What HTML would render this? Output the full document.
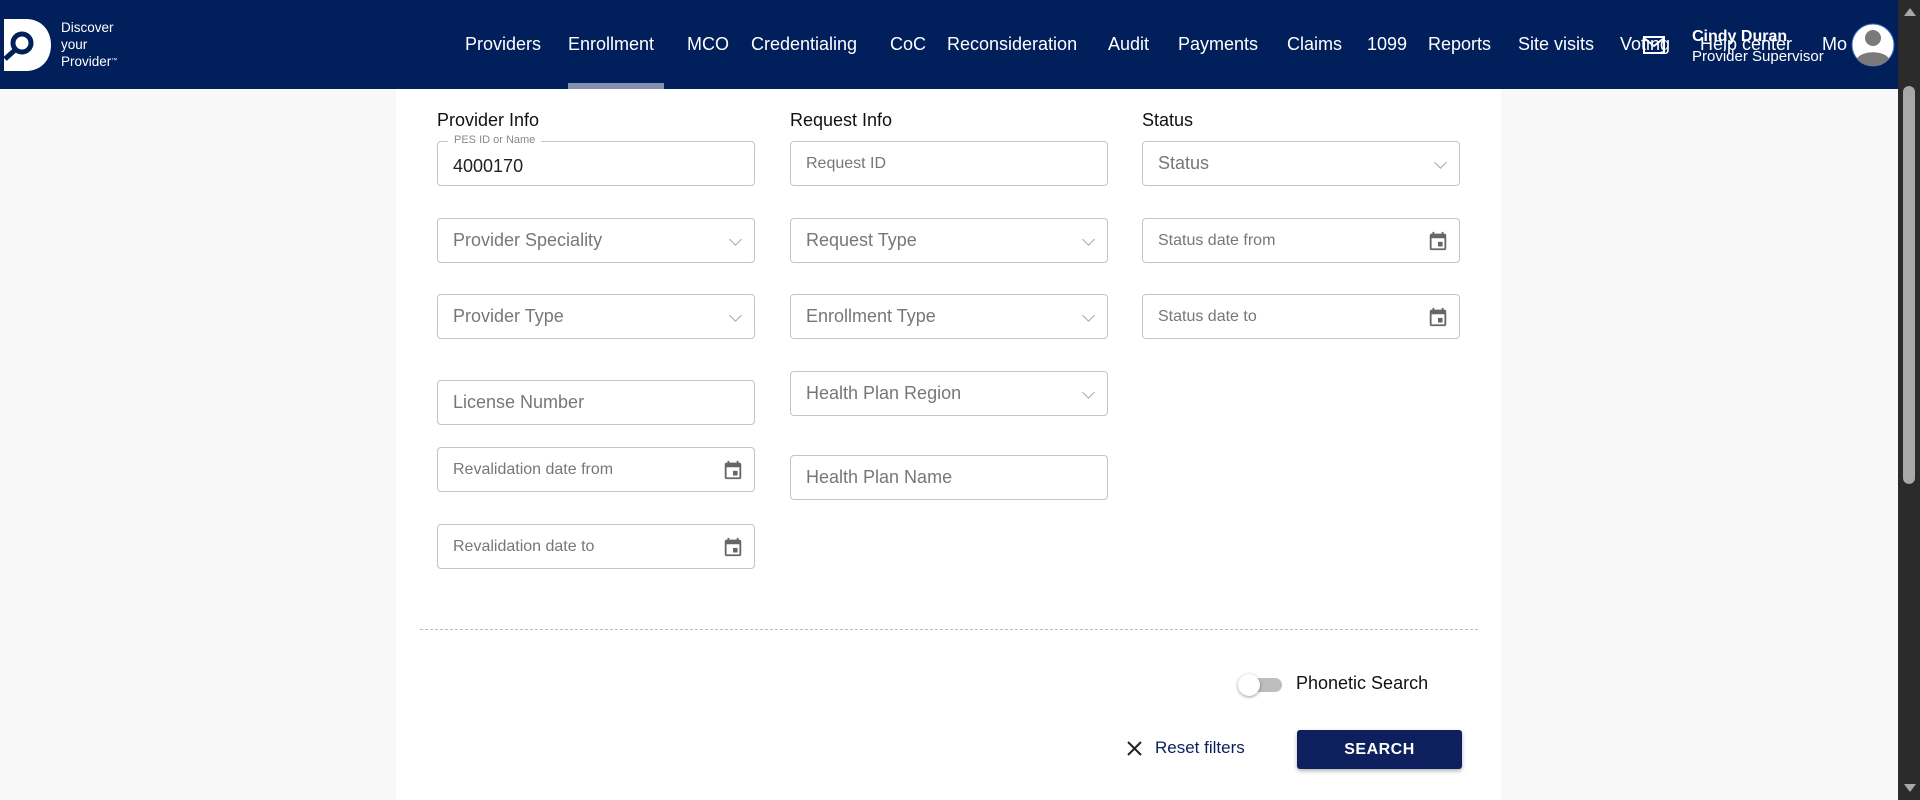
<!DOCTYPE html>
<html><head><meta charset="utf-8"><style>
*{box-sizing:border-box;margin:0;padding:0}
body{width:1920px;height:800px;overflow:hidden;background:#f8f8f8;font-family:"Liberation Sans",sans-serif;position:relative}
.hdr{position:absolute;left:0;top:0;width:1898px;height:89px;background:#001f5b;color:#fff}
.nav{position:absolute;top:34px;font-size:18px;white-space:nowrap}
.ul{position:absolute;left:568px;top:83px;width:96px;height:6px;background:#8490b0}
.card{position:absolute;left:396px;top:89px;width:1105px;height:711px;background:#fff}
.h{position:absolute;top:110px;font-size:18px;color:#111}
.f{position:absolute;width:318px;height:45px;border:1px solid #c4c4c4;border-radius:4px;background:#fff;font-size:18px;color:#777;padding-left:15px;line-height:43px}
.f.s{font-size:16px}
.chev{position:absolute;right:14px;top:16px;width:9px;height:9px;border-right:1.5px solid #aaa;border-bottom:1.5px solid #aaa;transform:rotate(45deg)}
.cal{position:absolute;right:10px;top:11px}
.sb{position:absolute;left:1898px;top:0;width:22px;height:800px;background:#2b2b2b}
</style></head><body>
<div class="hdr">
<svg style="position:absolute;left:4px;top:19px" width="48" height="52" viewBox="0 0 48 52"><path d="M0 0H22C37 0 47 11 47 26C47 41 37 52 22 52H0Z" fill="#fff"/><circle cx="18" cy="24" r="9" fill="none" stroke="#001f5b" stroke-width="5"/><path d="M11 31L1 40" stroke="#001f5b" stroke-width="5"/></svg>
<div style="position:absolute;left:61px;top:19px;font-size:13.5px;line-height:17px">Discover<br>your<br>Provider<span style="font-size:6px;vertical-align:top">™</span></div>
<span class="nav" style="left:465px">Providers</span>
<span class="nav" style="left:568px">Enrollment</span>
<span class="nav" style="left:687px">MCO</span>
<span class="nav" style="left:751px">Credentialing</span>
<span class="nav" style="left:890px">CoC</span>
<span class="nav" style="left:947px">Reconsideration</span>
<span class="nav" style="left:1108px">Audit</span>
<span class="nav" style="left:1178px">Payments</span>
<span class="nav" style="left:1287px">Claims</span>
<span class="nav" style="left:1367px">1099</span>
<span class="nav" style="left:1428px">Reports</span>
<span class="nav" style="left:1518px">Site visits</span>
<span class="nav" style="left:1620px">Voting</span>
<span class="nav" style="left:1700px">Help center</span>
<span class="nav" style="left:1822px">Mo</span>
<svg style="position:absolute;left:1643px;top:35px" width="22" height="20" viewBox="0 0 22 20"><rect x="1" y="2" width="20" height="16" fill="none" stroke="#fff" stroke-width="2"/><path d="M1 3L11 11L21 3" fill="none" stroke="#fff" stroke-width="2"/></svg>
<div style="position:absolute;left:1692px;top:28px;font-size:16px;font-weight:bold">Cindy Duran</div>
<div style="position:absolute;left:1692px;top:48px;font-size:15px">Provider Supervisor</div>
<svg style="position:absolute;left:1851px;top:23px" width="44" height="44" viewBox="0 0 44 44"><circle cx="22" cy="22" r="21" fill="#fff" stroke="#3a6fc4"/><circle cx="22" cy="15" r="8" fill="#7a7a7a"/><path d="M6 36C10 27 34 27 38 36C34 41 28 43 22 43C16 43 10 41 6 36Z" fill="#7a7a7a"/></svg>
<div class="ul"></div>
</div>
<div class="card"></div>
<div class="h" style="left:437px">Provider Info</div>
<div class="h" style="left:790px">Request Info</div>
<div class="h" style="left:1142px">Status</div>

<div class="f" style="left:437px;top:141px;color:#222;padding-top:3px">4000170
<span style="position:absolute;left:10px;top:-9px;font-size:11px;line-height:14px;background:#fff;padding:0 6px;color:#888">PES ID or Name</span></div>
<div class="f s" style="left:790px;top:141px">Request ID</div>
<div class="f" style="left:1142px;top:141px">Status<i class="chev"></i></div>

<div class="f" style="left:437px;top:218px">Provider Speciality<i class="chev"></i></div>
<div class="f" style="left:790px;top:218px">Request Type<i class="chev"></i></div>
<div class="f s" style="left:1142px;top:218px">Status date from<svg class="cal" width="22" height="22" viewBox="0 0 24 24"><path d="M19 4h-1V2h-2v2H8V2H6v2H5C3.9 4 3 4.9 3 6v14c0 1.1.9 2 2 2h14c1.1 0 2-.9 2-2V6c0-1.1-.9-2-2-2zm0 16H5V9h14v11zM12 13h5v5h-5z" fill="#666"/></svg></div>

<div class="f" style="left:437px;top:294px">Provider Type<i class="chev"></i></div>
<div class="f" style="left:790px;top:294px">Enrollment Type<i class="chev"></i></div>
<div class="f s" style="left:1142px;top:294px">Status date to<svg class="cal" width="22" height="22" viewBox="0 0 24 24"><path d="M19 4h-1V2h-2v2H8V2H6v2H5C3.9 4 3 4.9 3 6v14c0 1.1.9 2 2 2h14c1.1 0 2-.9 2-2V6c0-1.1-.9-2-2-2zm0 16H5V9h14v11zM12 13h5v5h-5z" fill="#666"/></svg></div>

<div class="f" style="left:790px;top:371px">Health Plan Region<i class="chev"></i></div>
<div class="f" style="left:437px;top:380px">License Number</div>
<div class="f s" style="left:437px;top:447px">Revalidation date from<svg class="cal" width="22" height="22" viewBox="0 0 24 24"><path d="M19 4h-1V2h-2v2H8V2H6v2H5C3.9 4 3 4.9 3 6v14c0 1.1.9 2 2 2h14c1.1 0 2-.9 2-2V6c0-1.1-.9-2-2-2zm0 16H5V9h14v11zM12 13h5v5h-5z" fill="#666"/></svg></div>
<div class="f" style="left:790px;top:455px">Health Plan Name</div>
<div class="f s" style="left:437px;top:524px">Revalidation date to<svg class="cal" width="22" height="22" viewBox="0 0 24 24"><path d="M19 4h-1V2h-2v2H8V2H6v2H5C3.9 4 3 4.9 3 6v14c0 1.1.9 2 2 2h14c1.1 0 2-.9 2-2V6c0-1.1-.9-2-2-2zm0 16H5V9h14v11zM12 13h5v5h-5z" fill="#666"/></svg></div>

<div style="position:absolute;left:420px;top:629px;width:1058px;border-top:1px dashed #bbb"></div>

<div style="position:absolute;left:1242px;top:678px;width:40px;height:14px;border-radius:7px;background:#bdbdbd"></div>
<div style="position:absolute;left:1238px;top:674px;width:22px;height:22px;border-radius:50%;background:#fff;box-shadow:0 1px 3px rgba(0,0,0,.4)"></div>
<div style="position:absolute;left:1296px;top:673px;font-size:18px;color:#111">Phonetic Search</div>

<svg style="position:absolute;left:1127px;top:741px" width="15" height="15" viewBox="0 0 15 15"><path d="M1 1L14 14M14 1L1 14" stroke="#222" stroke-width="2"/></svg>
<div style="position:absolute;left:1155px;top:738px;font-size:17px;color:#0a1f5c">Reset filters</div>
<div style="position:absolute;left:1297px;top:730px;width:165px;height:39px;background:#0d1f5c;border-radius:3px;color:#fff;font-weight:bold;font-size:16px;text-align:center;line-height:39px;letter-spacing:.5px;box-shadow:0 2px 4px rgba(0,0,0,.3)">SEARCH</div>

<div class="sb">
<div style="position:absolute;left:6px;top:8px;width:0;height:0;border-left:6px solid transparent;border-right:6px solid transparent;border-bottom:8px solid #a8a8a8"></div>
<div style="position:absolute;left:5px;top:86px;width:12px;height:398px;border-radius:6px;background:#a8a8a8"></div>
<div style="position:absolute;left:6px;top:784px;width:0;height:0;border-left:6px solid transparent;border-right:6px solid transparent;border-top:8px solid #a8a8a8"></div>
</div>
</body></html>
